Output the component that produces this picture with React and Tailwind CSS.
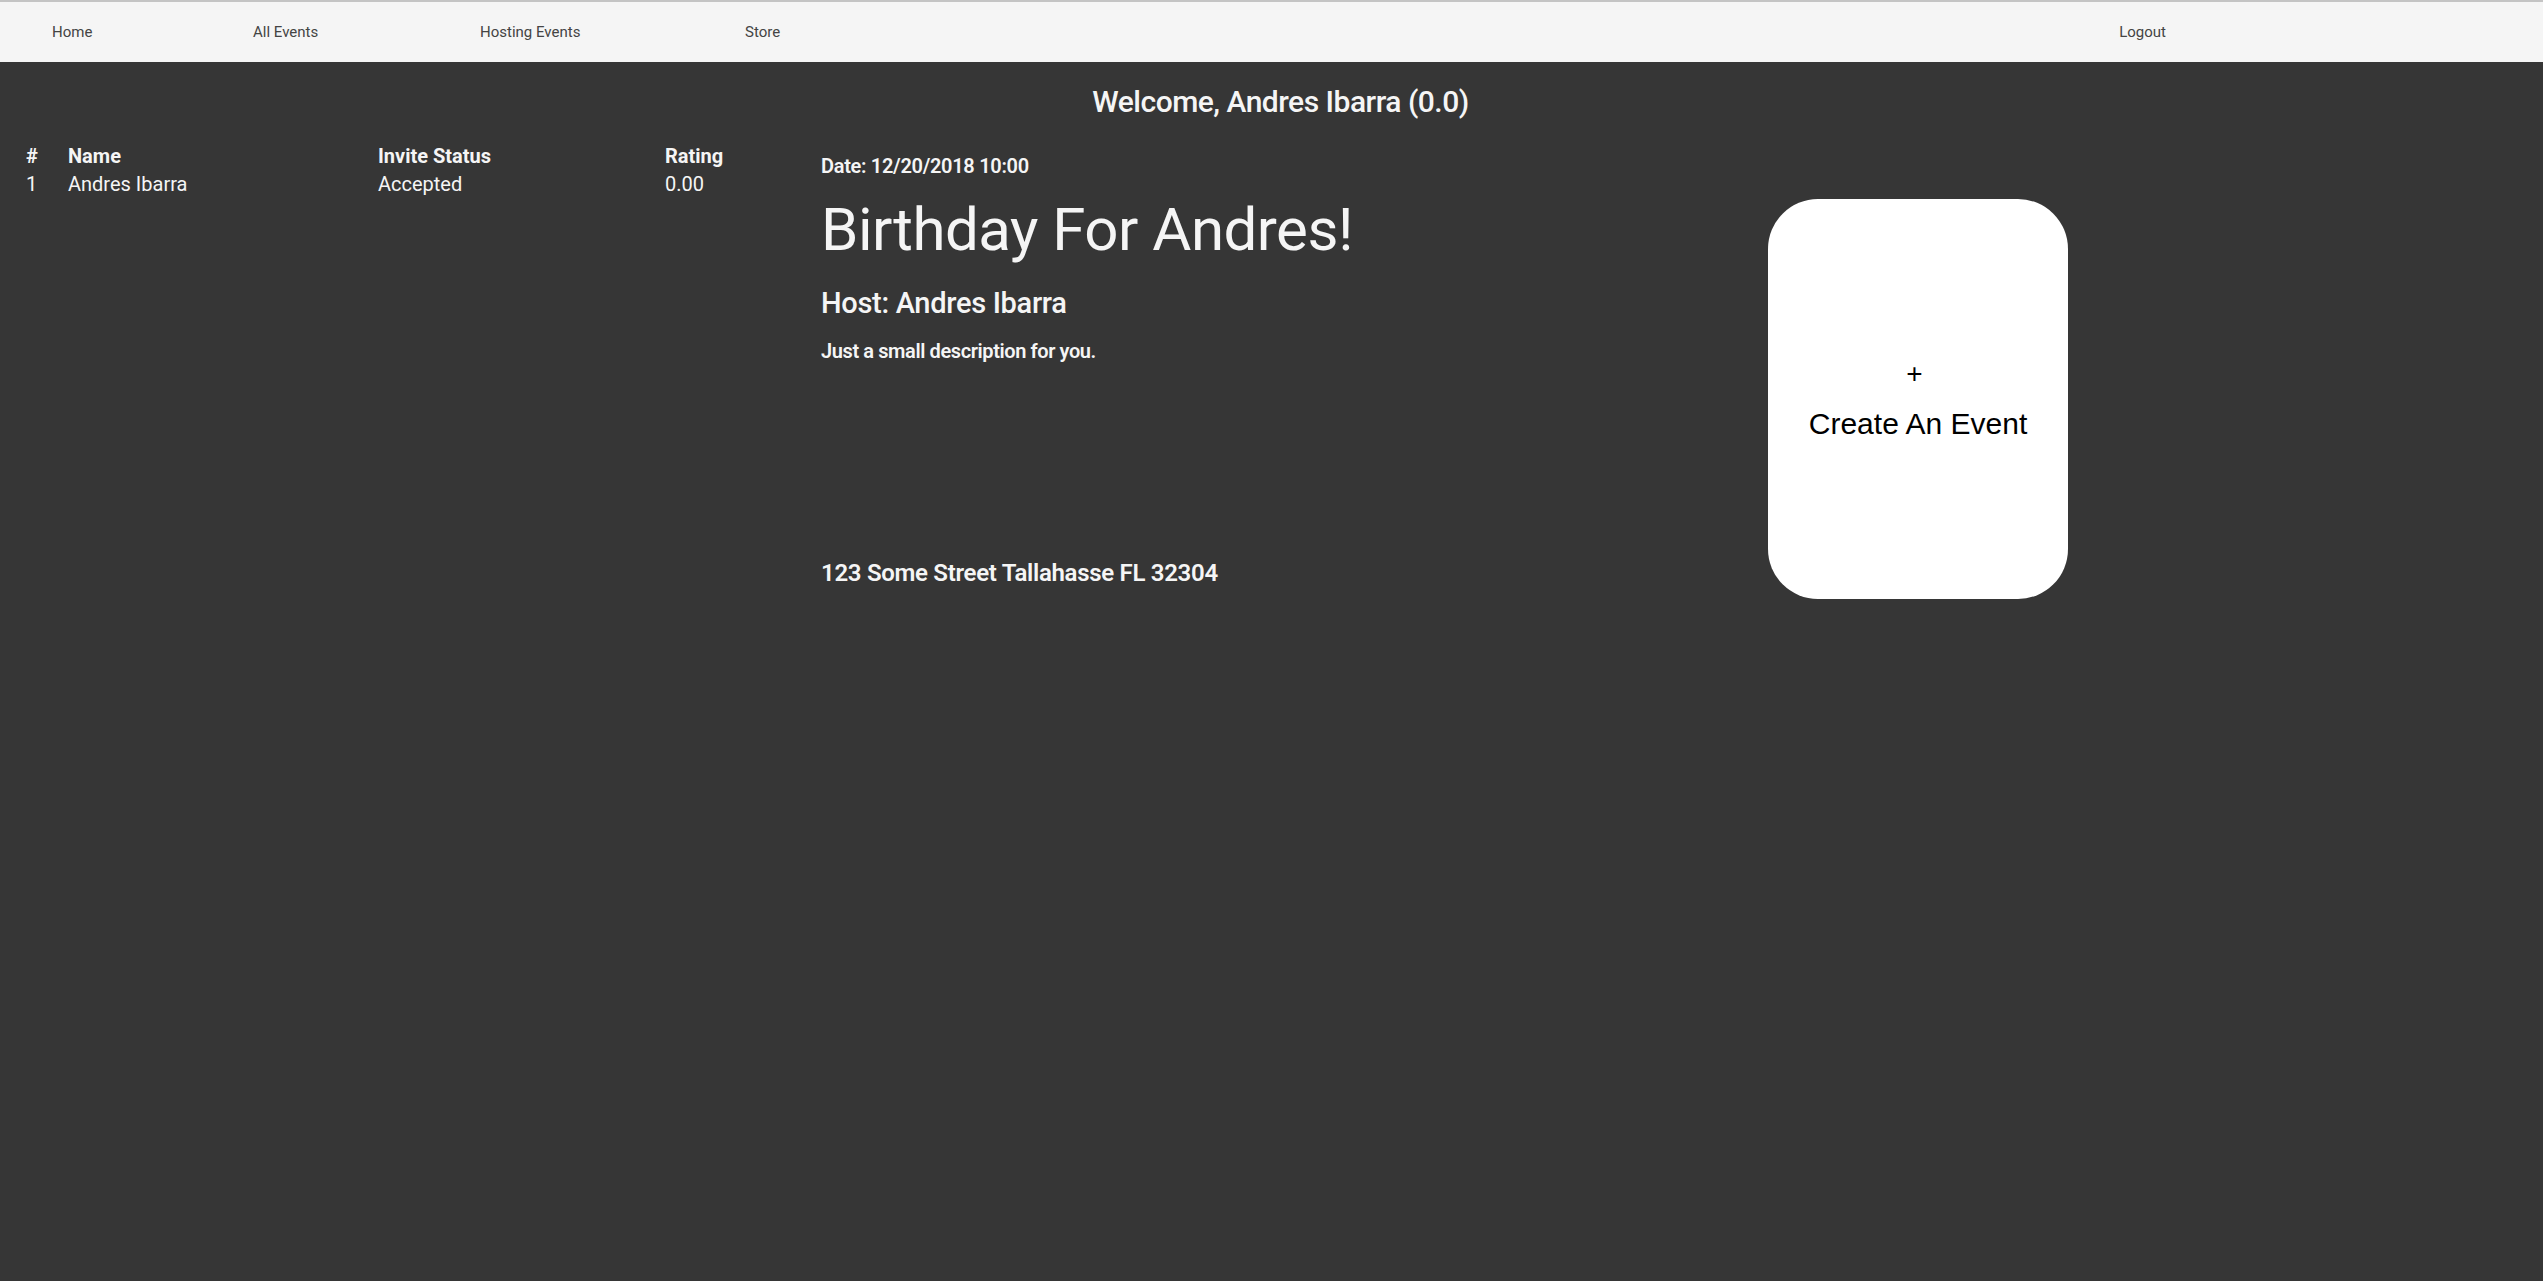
import React from 'react';

const navLinks = [
  { label: 'Home', className: 'w-[201px]' },
  { label: 'All Events', className: 'w-[227px]' },
  { label: 'Hosting Events', className: 'w-[265px]' },
  { label: 'Store', className: '' },
];

const guests = [
  { id: 1, name: 'Andres Ibarra', status: 'Accepted', rating: '0.00' },
];

const App = () => {
  return (
    <div className="min-h-screen bg-[#363636] font-['Roboto',sans-serif] text-[#f5f5f5]">
      {/* top bar */}
      <nav className="flex h-[62px] items-center border-t-2 border-[#c4c4c4] bg-[#f5f5f5] pl-[52px] pr-[377px] text-[15px] text-[#444]">
        {navLinks.map((link) => (
          <a key={link.label} href="#" className={link.className}>
            {link.label}
          </a>
        ))}
        <a href="#" className="ml-auto">Logout</a>
      </nav>

      <h2 className="mt-[22px] pl-[18px] text-center text-[30px] leading-9 font-medium tracking-[-0.5px]">
        Welcome, Andres Ibarra (0.0)
      </h2>

      <div className="mt-[22px] flex">
        {/* guest list */}
        <div className="w-[821px] pl-[26px]">
          <div className="grid grid-cols-[42px_310px_287px_1fr] text-[20px] leading-7">
            <div className="font-bold">#</div>
            <div className="font-bold">Name</div>
            <div className="font-bold">Invite Status</div>
            <div className="font-bold">Rating</div>
            {guests.map((g) => (
              <React.Fragment key={g.id}>
                <div>{g.id}</div>
                <div>{g.name}</div>
                <div>{g.status}</div>
                <div>{g.rating}</div>
              </React.Fragment>
            ))}
          </div>
        </div>

        {/* event details */}
        <div className="w-[947px] pt-[10px]">
          <p className="text-[20px] leading-7 font-semibold tracking-[-0.3px]">Date: 12/20/2018 10:00</p>
          <h1 className="mt-[14px] text-[60px] leading-[72px] tracking-[-0.5px]">Birthday For Andres!</h1>
          <h3 className="mt-[19px] text-[29px] leading-9 font-medium tracking-[-0.3px]">Host: Andres Ibarra</h3>
          <p className="mt-[16px] text-[20px] leading-7 font-semibold tracking-[-0.4px]">Just a small description for you.</p>
          <p className="mt-[192px] text-[24px] leading-8 font-semibold tracking-[-0.3px]">123 Some Street Tallahasse FL 32304</p>
        </div>

        {/* create card */}
        <div className="mt-[57px] flex h-[400px] w-[300px] flex-col items-center justify-center gap-[14px] rounded-[50px] bg-white font-['Liberation_Sans',Arial,sans-serif] text-black">
          <span className="pr-[7px] text-[28px] leading-9">+</span>
          <span className="text-[30px] leading-9">Create An Event</span>
        </div>
      </div>
    </div>
  );
};

export default App;
